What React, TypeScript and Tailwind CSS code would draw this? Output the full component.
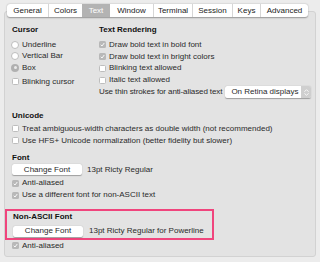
import React from 'react';

const font = { fontFamily: '"Liberation Sans", Arial, sans-serif' };

const tabs = [
  { label: 'General', w: 'w-[41px]' },
  { label: 'Colors', w: 'w-[34px]' },
  { label: 'Text', w: 'w-[28px]', active: true },
  { label: 'Window', w: 'w-[43px]' },
  { label: 'Terminal', w: 'w-[39px]' },
  { label: 'Session', w: 'w-[40px]' },
  { label: 'Keys', w: 'w-[28px]' },
  { label: 'Advanced', w: 'w-[48px]' },
];

const Check = ({ checked }: { checked?: boolean }) =>
  checked ? (
    <span className="flex h-[7px] w-[7px] shrink-0 items-center justify-center rounded-[1.5px] bg-[#b8b8b8]">
      <svg width="5" height="5" viewBox="0 0 10 10">
        <path d="M1.5 5.5 L4 8 L8.5 2" fill="none" stroke="#fff" strokeWidth="1.8" />
      </svg>
    </span>
  ) : (
    <span className="h-[7px] w-[7px] shrink-0 rounded-[1.5px] border border-[#bdbdbd] bg-white" />
  );

const Radio = ({ checked }: { checked?: boolean }) =>
  checked ? (
    <span className="flex h-[8px] w-[8px] shrink-0 items-center justify-center rounded-full bg-[#b0b0b0]">
      <span className="h-[3px] w-[3px] rounded-full bg-[#eaeaea]" />
    </span>
  ) : (
    <span className="h-[8px] w-[8px] shrink-0 rounded-full border border-[#bdbdbd] bg-white" />
  );

const CheckRow = ({ label, checked, className = '' }: { label: string; checked?: boolean; className?: string }) => (
  <div className={`flex items-center gap-[3px] h-[11.75px] ${className}`}>
    <Check checked={checked} />
    <span className="text-[#2a2a2a] whitespace-nowrap">{label}</span>
  </div>
);

const RadioRow = ({ label, checked }: { label: string; checked?: boolean }) => (
  <div className="flex items-center gap-[3px] h-[11.5px] -ml-[1px]">
    <Radio checked={checked} />
    <span className="text-[#2a2a2a] whitespace-nowrap">{label}</span>
  </div>
);

const Button = ({ children }: { children: React.ReactNode }) => (
  <div className="flex h-[11px] w-[70px] items-center justify-center rounded-[2px] bg-white text-[#2a2a2a] shadow-[0_0.5px_1px_rgba(0,0,0,0.3)]">
    {children}
  </div>
);

export default function App() {
  return (
    <div className="h-[262px] w-[320px] bg-[#ececec] pt-[11px] px-[4px] text-[8px] leading-none" style={font}>
      <div className="h-[246px] rounded-[3px] border border-[#d2d2d2] bg-[#e3e3e3]">
        <div className="-mt-[8px] ml-[2px] flex h-[13px] w-fit rounded-[3px] bg-white shadow-[0_0.5px_1.5px_rgba(0,0,0,0.35)] overflow-hidden">
          {tabs.map((t, i) => (
            <div
              key={t.label}
              className={`flex items-center justify-center ${t.w} ${
                t.active ? 'bg-[#b3b3b3] text-white' : 'text-[#222]'
              } ${i > 0 && !t.active && !tabs[i - 1].active ? 'border-l border-[#d6d6d6]' : ''}`}
            >
              {t.label}
            </div>
          ))}
        </div>

        <div className="grid grid-cols-[87px_1fr] pl-[7px] pt-[7px]">
          <div>
            <div className="h-[12px] flex items-center font-bold text-[#111]">Cursor</div>
            <div className="h-[3px]" />
            <RadioRow label="Underline" />
            <RadioRow label="Vertical Bar" />
            <RadioRow label="Box" checked />
            <div className="h-[2.5px]" />
            <CheckRow label="Blinking cursor" />
          </div>
          <div>
            <div className="h-[12px] flex items-center font-bold text-[#111]">Text Rendering</div>
            <div className="h-[3px]" />
            <CheckRow label="Draw bold text in bold font" checked />
            <CheckRow label="Draw bold text in bright colors" checked />
            <CheckRow label="Blinking text allowed" />
            <CheckRow label="Italic text allowed" />
            <div className="flex items-center h-[12px] gap-[3px]">
              <span className="text-[#2a2a2a] whitespace-nowrap tracking-[-0.1px]">Use thin strokes for anti-aliased text</span>
              <div className="flex h-[12px] w-[86px] shrink-0 items-center justify-between rounded-[2px] bg-white pl-[6px] shadow-[0_0.5px_1px_rgba(0,0,0,0.3)]">
                <span className="text-[#2a2a2a] whitespace-nowrap">On Retina displays</span>
                <span className="flex h-full w-[10px] flex-col items-center justify-center gap-[1px] rounded-r-[2px] bg-[#cfcfcf]">
                  <svg width="5" height="3" viewBox="0 0 6 3">
                    <path d="M0.5 3 L3 0.5 L5.5 3" fill="none" stroke="#fff" strokeWidth="1" />
                  </svg>
                  <svg width="5" height="3" viewBox="0 0 6 3">
                    <path d="M0.5 0 L3 2.5 L5.5 0" fill="none" stroke="#fff" strokeWidth="1" />
                  </svg>
                </span>
              </div>
            </div>
          </div>
        </div>

        <div className="pl-[7px] pt-[12px]">
          <div className="h-[12px] flex items-center font-bold text-[#111]">Unicode</div>
          <div className="h-[1px]" />
          <CheckRow label="Treat ambiguous-width characters as double width (not recommended)" />
          <CheckRow label="Use HFS+ Unicode normalization (better fidelity but slower)" />

          <div className="h-[5px]" />
          <div className="h-[12px] flex items-center font-bold text-[#111]">Font</div>
          <div className="flex items-center gap-[5px] h-[12px]">
            <Button>Change Font</Button>
            <span className="text-[#2a2a2a]">13pt Ricty Regular</span>
          </div>
          <div className="h-[2px]" />
          <CheckRow label="Anti-aliased" checked />
          <CheckRow label="Use a different font for non-ASCII text" checked />
        </div>

        <div className="mt-[8px] w-[209px] h-[31px] border-2 border-[#f0457d] pl-[6px] pt-[1px]">
          <div className="h-[10px] flex items-center font-bold text-[#111]">Non-ASCII Font</div>
          <div className="flex items-center gap-[6px] h-[12px] mt-[3px]">
            <Button>Change Font</Button>
            <span className="text-[#2a2a2a]">13pt Ricty Regular for Powerline</span>
          </div>
        </div>
        <div className="pl-[7px]">
          <CheckRow label="Anti-aliased" checked />
        </div>
      </div>
    </div>
  );
}
